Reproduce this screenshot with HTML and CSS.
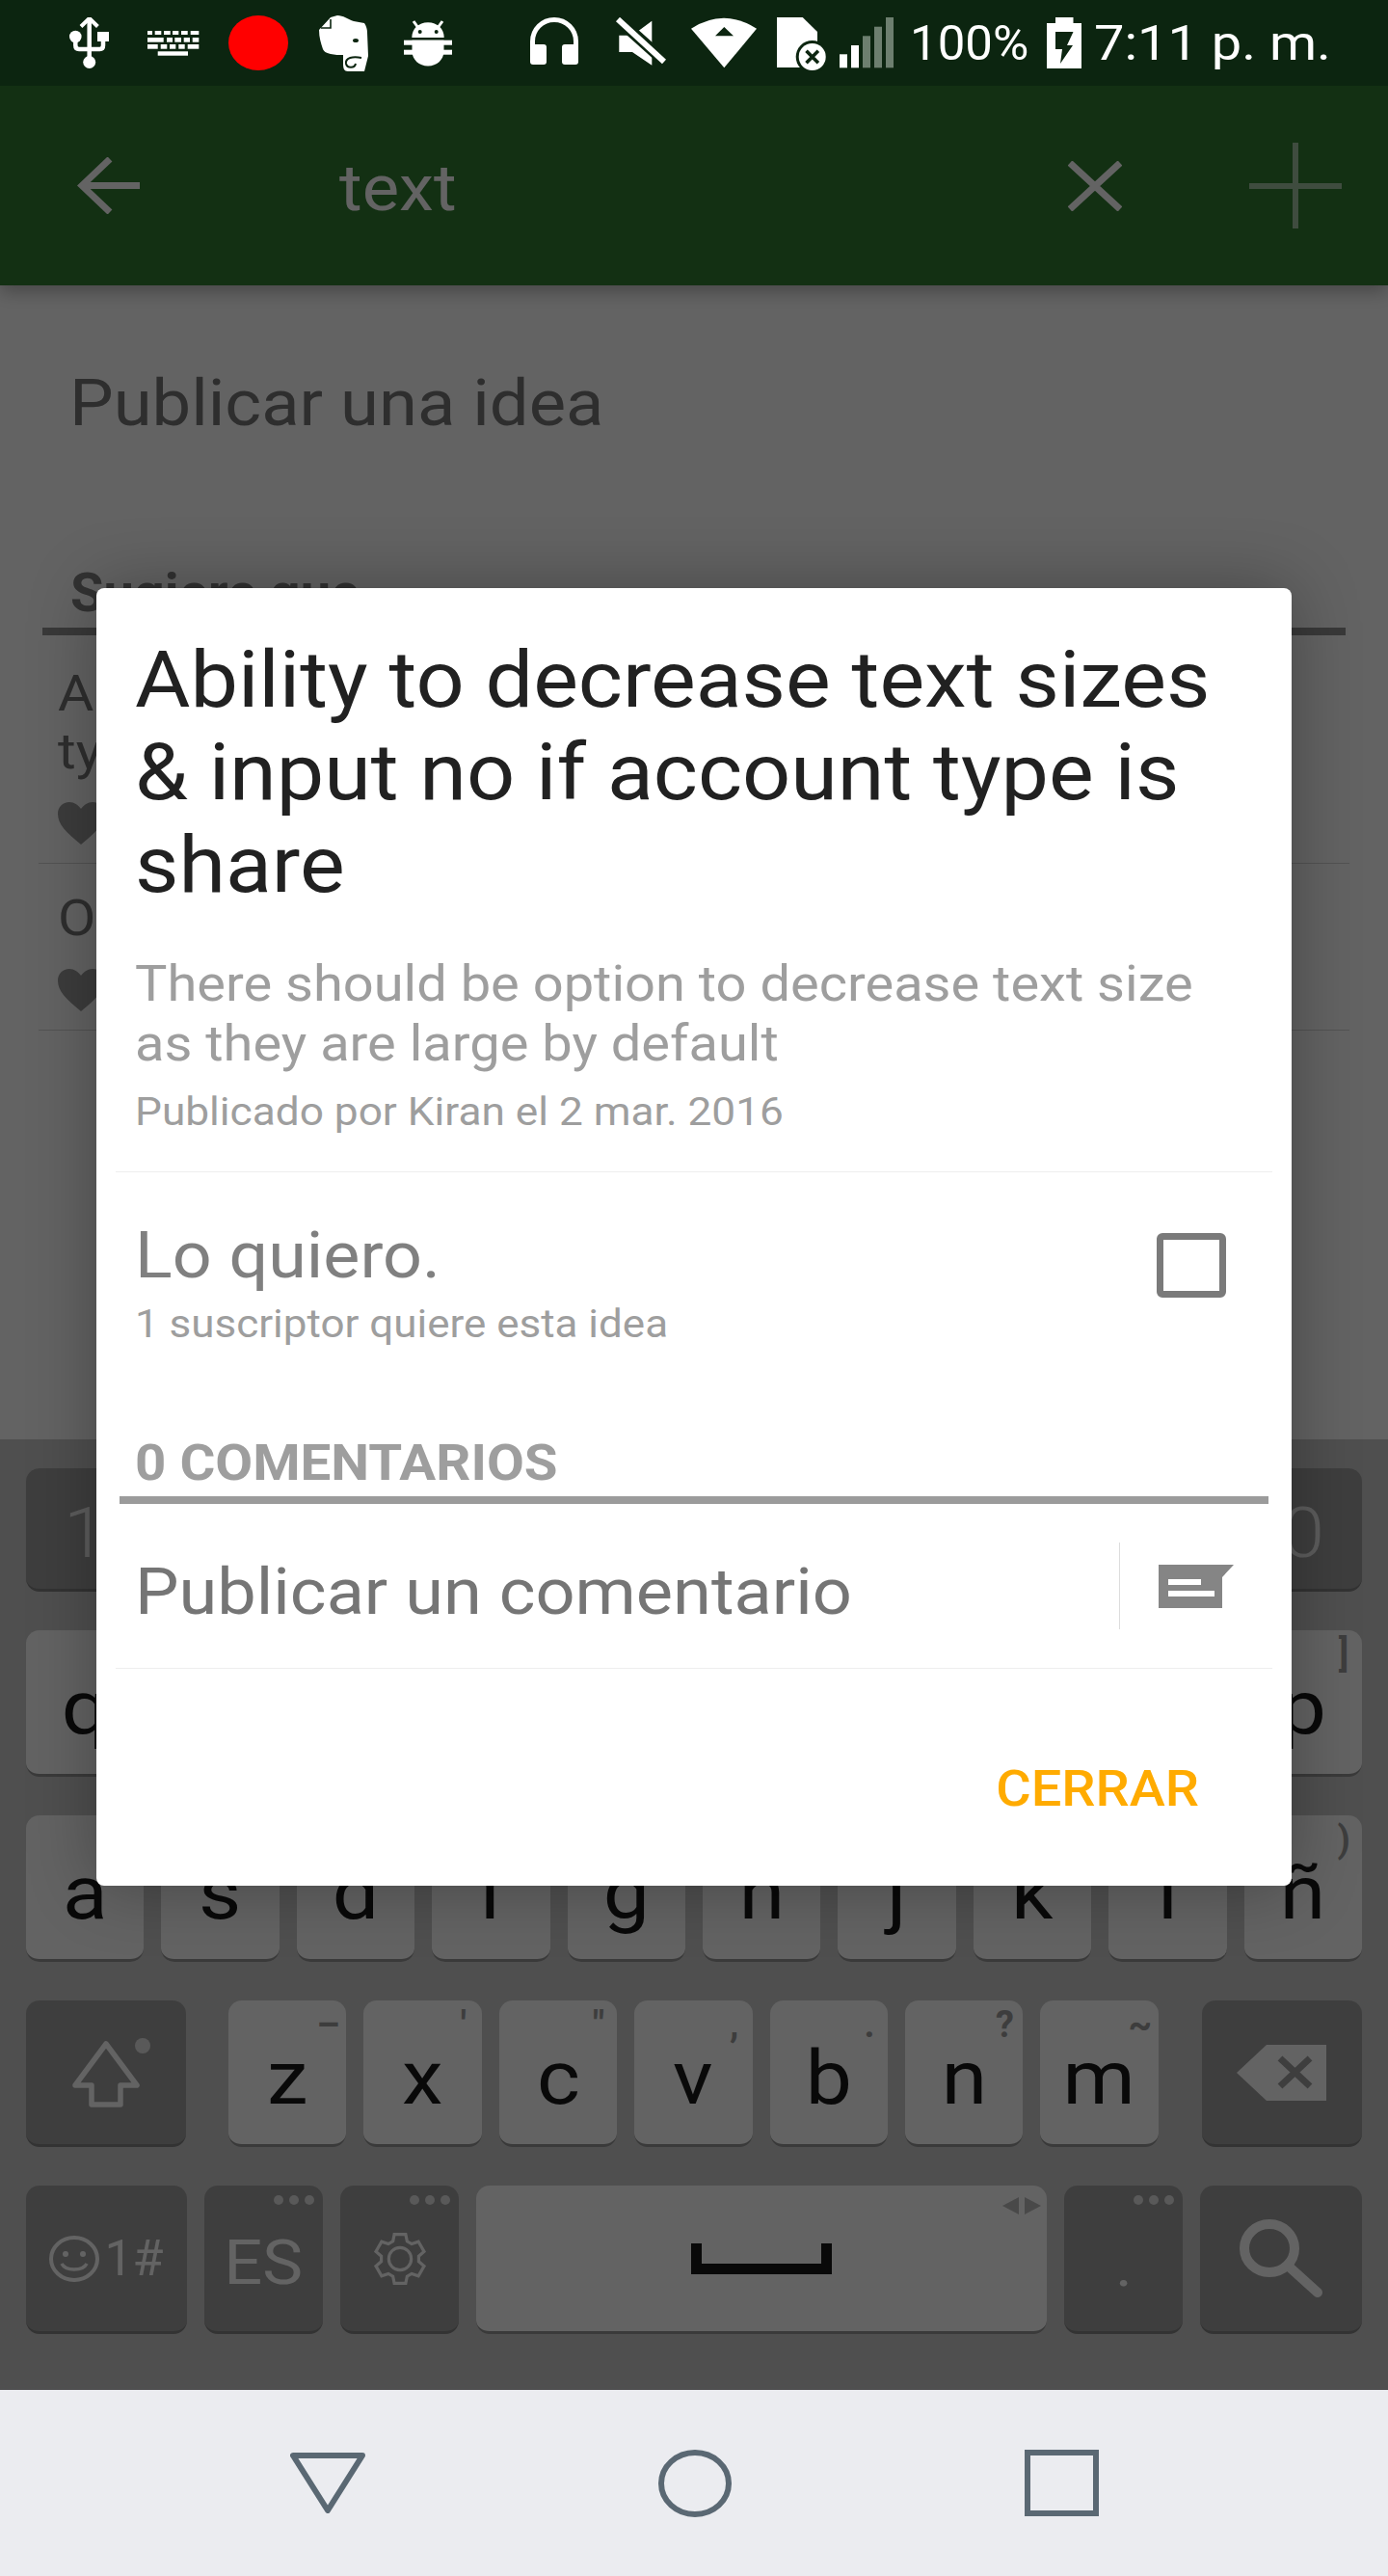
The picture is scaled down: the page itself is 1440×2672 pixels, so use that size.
FILE: index.html
```html
<!DOCTYPE html>
<html lang="es">

<head>
  <meta charset="UTF-8">
  <meta name="viewport" content="width=device-width, initial-scale=1.0">
  <title>Publicar una idea</title>
  <link rel="stylesheet" href="styles.css">
</head>

<body>
  <div class="screen">

    <div class="status">
      <svg class="ic-usb" viewBox="0 0 41 53">
        <path d="M20.7 3V46M6.3 24V29Q6.3 33 10 33H31.5Q35 33 35 29V24" fill="none" stroke="#fff" stroke-width="4.5"/>
        <path d="M12 9.5L20.7 1L29.4 9.5" fill="none" stroke="#fff" stroke-width="4"/>
        <circle cx="6.3" cy="20" r="6.3" fill="#fff"/>
        <circle cx="20.7" cy="46.5" r="6.5" fill="#fff"/>
        <rect x="29" y="15" width="12" height="10" fill="#fff"/>
      </svg>
      <svg class="ic-kbd" viewBox="0 0 54 26" fill="#fff">
        <rect x="0" y="0" width="5" height="4"/><rect x="7.7" y="0" width="6.6" height="4"/><rect x="17" y="0" width="6.7" height="4"/><rect x="26" y="0" width="6.3" height="4"/><rect x="35" y="0" width="6.7" height="4"/><rect x="44.7" y="0" width="8.6" height="4"/>
        <rect x="0" y="7" width="16.7" height="4.7"/><rect x="20" y="7" width="6" height="4.7"/><rect x="28.3" y="7" width="6.7" height="4.7"/><rect x="37.7" y="7" width="6.3" height="4.7"/><rect x="46.7" y="7" width="6.6" height="4.7"/>
        <rect x="0" y="14" width="10.7" height="4.7"/><rect x="13.7" y="14" width="6.6" height="4.7"/><rect x="23" y="14" width="6.3" height="4.7"/><rect x="32.3" y="14" width="6.4" height="4.7"/><rect x="41.7" y="14" width="11.6" height="4.7"/>
        <rect x="10.7" y="21.3" width="31.3" height="4.4"/>
      </svg>
      <span class="rec-dot"></span>
      <svg class="ic-note" viewBox="0 0 52 58">
        <path d="M13 2L20 0C26 0 31 4 37 6L48 8C50 11 51 14 51 18L52 42L48 58H31C27 58 26 55 26 50L26 41C22 41 17 41 13 40C8 39 6 37 5 35C3 29 1 23 1 15Z" fill="#fff"/>
        <path d="M13 4V13H3" fill="none" stroke="#0c2510" stroke-width="1.6"/>
        <ellipse cx="39" cy="26" rx="3" ry="2" fill="#0c2510"/>
        <path d="M45 44C36 42 28 44 29 50C30 55 38 55 39 50" fill="none" stroke="#0c2510" stroke-width="2"/>
      </svg>
      <svg class="ic-bug" viewBox="0 0 50 49">
        <path d="M14.3 8L10 2M35.7 8L40 2" stroke="#fff" stroke-width="3"/>
        <path d="M8.3 19C8.3 10 15 3.2 25 3.2C35 3.2 41.7 10 41.7 19Z" fill="#fff"/>
        <circle cx="16.7" cy="13" r="2" fill="#0c2510"/>
        <circle cx="33.7" cy="13" r="2" fill="#0c2510"/>
        <rect x="0" y="21.7" width="50" height="5" fill="#fff"/>
        <rect x="0" y="31.7" width="50" height="5" fill="#fff"/>
        <path d="M8.5 21.7H41.5V33C41.5 42 34 48.5 25 48.5C16 48.5 8.5 42 8.5 33Z" fill="#fff"/>
      </svg>
      <svg class="ic-phones" viewBox="0 0 50 50">
        <path d="M2.5 32V25A22.5 22.5 0 0 1 47.5 25V32" fill="none" stroke="#fff" stroke-width="5"/>
        <rect x="0" y="28" width="17" height="21" rx="3" fill="#fff"/>
        <rect x="33" y="28" width="17" height="21" rx="3" fill="#fff"/>
      </svg>
      <svg class="ic-mute" viewBox="0 0 52 50">
        <path d="M3.3 18.7H17L37.3 3.7V49.7L17 36H3.3Z" fill="#fff"/>
        <path d="M1 1L51 46" stroke="#0c2510" stroke-width="12"/>
        <path d="M2 2L50 46" stroke="#fff" stroke-width="6"/>
      </svg>
      <svg class="ic-wifi" viewBox="0 0 68 53">
        <path d="M0 11.7Q34 -10 68 11.7L34.3 52.3Z" fill="#fff"/>
        <path d="M25 19.3H44L34.3 10Z" fill="#0c2510"/>
      </svg>
      <svg class="ic-sim" viewBox="0 0 52 56">
        <path d="M0 0H26.7L42 15V52H0Z" fill="#fff"/>
        <circle cx="36.7" cy="41" r="17" fill="#0c2510"/>
        <circle cx="36.7" cy="41" r="14" fill="#fff"/>
        <path d="M30.5 34.8L42.9 47.2M42.9 34.8L30.5 47.2" stroke="#0c2510" stroke-width="3.6"/>
      </svg>
      <svg class="ic-signal" viewBox="0 0 56 53">
        <rect x="0" y="38.3" width="8" height="14" fill="#fff"/>
        <rect x="12" y="29" width="8" height="23.3" fill="#fff"/>
        <rect x="24" y="19.3" width="8" height="33" fill="#6d7f6f"/>
        <rect x="36" y="9.7" width="8" height="42.6" fill="#6d7f6f"/>
        <rect x="48" y="0" width="8" height="52.3" fill="#6d7f6f"/>
      </svg>
      <span class="status-pct">100%</span>
      <svg class="ic-batt" viewBox="0 0 36 53">
        <path d="M9 0H27.5V6H36V53H0V6H9Z" fill="#fff"/>
        <path d="M9 15H27.5L21 29H27L14 48L16 33H9Z" fill="#0c2510"/>
      </svg>
      <span class="status-time">7:11 p. m.</span>
    </div>

    <div class="body-wrap">
      <div class="appbar">
        <svg class="ic-back" viewBox="0 0 65 59">
          <path d="M34 2L5 29.5L34 57M5 29.5H65" fill="none" stroke="#fff" stroke-width="7"/>
        </svg>
        <span class="search-text">text</span>
        <svg class="ic-clear" viewBox="0 0 56 52">
          <path d="M2 2L54 50M54 2L2 50" stroke="#fff" stroke-width="7"/>
        </svg>
        <svg class="ic-plus" viewBox="0 0 96 89">
          <path d="M48 0V89M0 45H96" stroke="#fff" stroke-width="6"/>
        </svg>
      </div>

      <div class="page">
        <h1 class="page-title">Publicar una idea</h1>
        <h2 class="section-head">Sugiere que</h2>
        <div class="idea-list">
          <div class="idea">
            <p class="idea-text">Ability to decrease text sizes &amp; input no if<br>type is share</p>
            <svg class="ic-heart" viewBox="0 0 48 44"><path d="M24 44C8 31 0 23 0 12C0 5 5 0 12 0C17 0 21 3 24 7C27 3 31 0 36 0C43 0 48 5 48 12C48 23 40 31 24 44Z"/></svg>
          </div>
          <div class="idea">
            <p class="idea-text">Option to change the theme</p>
            <svg class="ic-heart" viewBox="0 0 48 44"><path d="M24 44C8 31 0 23 0 12C0 5 5 0 12 0C17 0 21 3 24 7C27 3 31 0 36 0C43 0 48 5 48 12C48 23 40 31 24 44Z"/></svg>
          </div>
        </div>
      </div>

      <div class="keyboard">
        <div class="kb-row row-num">
          <div class="key dark digit"><span class="ch">1</span></div><div class="key dark digit"><span class="ch">2</span></div><div class="key dark digit"><span class="ch">3</span></div><div class="key dark digit"><span class="ch">4</span></div><div class="key dark digit"><span class="ch">5</span></div>
          <div class="key dark digit"><span class="ch">6</span></div><div class="key dark digit"><span class="ch">7</span></div><div class="key dark digit"><span class="ch">8</span></div><div class="key dark digit"><span class="ch">9</span></div><div class="key dark digit"><span class="ch">0</span></div>
        </div>
        <div class="kb-row">
          <div class="key"><span class="ch">q</span></div><div class="key"><span class="ch">w</span></div><div class="key"><span class="ch">e</span></div><div class="key"><span class="ch">r</span></div><div class="key"><span class="ch">t</span></div>
          <div class="key"><span class="ch">y</span></div><div class="key"><span class="ch">u</span></div><div class="key"><span class="ch">i</span></div><div class="key"><span class="ch">o</span></div><div class="key"><span class="ch">p</span><span class="hint">]</span></div>
        </div>
        <div class="kb-row">
          <div class="key"><span class="ch">a</span></div><div class="key"><span class="ch">s</span></div><div class="key"><span class="ch">d</span></div><div class="key"><span class="ch">f</span></div><div class="key"><span class="ch">g</span></div>
          <div class="key"><span class="ch">h</span></div><div class="key"><span class="ch">j</span></div><div class="key"><span class="ch">k</span></div><div class="key"><span class="ch">l</span></div><div class="key"><span class="ch">ñ</span><span class="hint">)</span></div>
        </div>
        <div class="kb-row row-z">
          <div class="key dark wide shift">
            <svg class="ic-shift" viewBox="0 0 70 69">
              <path d="M35 3L67 46H50V66H20V46H3Z" fill="none" stroke="#fff" stroke-width="5.5" stroke-linejoin="round"/>
            </svg>
            <span class="shift-dot"></span>
          </div>
          <div class="key"><span class="ch">z</span><span class="hint">–</span></div>
          <div class="key"><span class="ch">x</span><span class="hint">'</span></div>
          <div class="key"><span class="ch">c</span><span class="hint">"</span></div>
          <div class="key"><span class="ch">v</span><span class="hint">,</span></div>
          <div class="key"><span class="ch">b</span><span class="hint">.</span></div>
          <div class="key"><span class="ch">n</span><span class="hint">?</span></div>
          <div class="key"><span class="ch">m</span><span class="hint">~</span></div>
          <div class="key dark wide center">
            <svg class="ic-bksp" viewBox="0 0 93 58">
              <path d="M0 29L31 0H93V58H31Z" fill="#fff"/>
              <path d="M45 14L76 43M76 14L45 43" stroke="#a0a0a0" stroke-width="7"/>
            </svg>
          </div>
        </div>
        <div class="kb-row row-bottom">
          <div class="key dark center sym">
            <svg class="ic-smile" viewBox="0 0 52 48">
              <ellipse cx="26" cy="24" rx="24" ry="22" fill="none" stroke="#fff" stroke-width="4"/>
              <ellipse cx="17" cy="19" rx="3" ry="3" fill="#fff"/>
              <ellipse cx="35" cy="19" rx="3" ry="3" fill="#fff"/>
              <path d="M13 29C17 37 35 37 39 29" fill="none" stroke="#fff" stroke-width="3.5"/>
            </svg>
            <span>1#</span>
          </div>
          <div class="key dark center lang"><span class="ch">ES</span><span class="more"><i></i><i></i><i></i></span></div>
          <div class="key dark center">
            <svg class="ic-gear" viewBox="0 0 60 60">
              <path d="M22.13 10.53L23.7 2.72H36.3L37.87 10.53L42.93 13.45L50.48 10.9L56.78 21.81L50.8 27.08V32.92L56.78 38.19L50.48 49.1L42.93 46.55L37.87 49.47L36.3 57.28H23.7L22.13 49.47L17.07 46.55L9.52 49.1L3.22 38.19L9.2 32.92V27.08L3.22 21.81L9.52 10.9L17.07 13.45Z" fill="none" stroke="#fff" stroke-width="3.4"/>
              <circle cx="30" cy="30" r="12.5" fill="none" stroke="#fff" stroke-width="3.4"/>
            </svg>
            <span class="more"><i></i><i></i><i></i></span>
          </div>
          <div class="key space center">
            <span class="space-mark"></span>
            <svg class="ic-cursor" viewBox="0 0 40 18">
              <path d="M17 0V18L0 9ZM23 0L40 9L23 18Z" fill="#bdbdbd"/>
            </svg>
          </div>
          <div class="key dark center period"><span class="ch">.</span><span class="more"><i></i><i></i><i></i></span></div>
          <div class="key dark center search">
            <svg class="ic-search" viewBox="0 0 87 82">
              <ellipse cx="31" cy="30" rx="26" ry="25" fill="none" stroke="#fff" stroke-width="10"/>
              <path d="M50 48L81 76" stroke="#fff" stroke-width="10" stroke-linecap="round"/>
            </svg>
          </div>
        </div>
      </div>

      <div class="scrim"></div>
    </div>

    <div class="navbar">
      <svg class="ic-nav-back" viewBox="0 0 78 63"><path d="M3 3H75L39 60Z" fill="none" stroke="#5a6873" stroke-width="6" stroke-linejoin="round"/></svg>
      <svg class="ic-nav-home" viewBox="0 0 76 70"><ellipse cx="38" cy="35" rx="35" ry="32" fill="none" stroke="#5a6873" stroke-width="6"/></svg>
      <svg class="ic-nav-recent" viewBox="0 0 77 69"><rect x="3" y="3" width="71" height="63" fill="none" stroke="#5a6873" stroke-width="6"/></svg>
    </div>

    <div class="dialog">
      <h2 class="dlg-title">Ability to decrease text sizes<br>&amp; input no if account type is<br>share</h2>
      <p class="dlg-desc">There should be option to decrease text size<br>as they are large by default</p>
      <p class="dlg-meta">Publicado por Kiran el 2 mar. 2016</p>
      <div class="vote-row">
        <div>
          <div class="vote-label">Lo quiero.</div>
          <div class="vote-count">1 suscriptor quiere esta idea</div>
        </div>
        <span class="checkbox"></span>
      </div>
      <div class="comments-head"><span class="comments-text">0 COMENTARIOS</span></div>
      <div class="comment-row">
        <span class="comment-input">Publicar un comentario</span>
        <span class="comment-send">
          <svg class="ic-send" viewBox="0 0 78 45">
            <path d="M0 0H78L66 13V45H0Z" fill="#858585"/>
            <rect x="10" y="15" width="34" height="6" fill="#fff"/>
            <rect x="10" y="27" width="48" height="6" fill="#fff"/>
          </svg>
        </span>
      </div>
      <div class="dlg-actions"><span class="btn-close">CERRAR</span></div>
    </div>

  </div>
</body>
</html>
```

FILE: styles.css
```css
* {
  box-sizing: border-box;
}
html, body {
  margin: 0;
  padding: 0;
}
body {
  font-family: Roboto, "Liberation Sans", sans-serif;
  background-color: #000;
}
h1, h2, p {
  margin: 0;
  font-weight: normal;
}
svg {
  display: block;
  flex: none;
}

.screen {
  position: relative;
  width: 1440px;
  height: 2672px;
  display: flex;
  flex-direction: column;
  overflow: hidden;
}

/* status bar */
.status {
  height: 89px;
  flex: none;
  display: flex;
  align-items: center;
  padding-left: 72px;
  background-color: #0c2510;
  color: #fff;
  position: relative;
  z-index: 2;
}
.ic-usb { width: 41px; height: 53px; }
.ic-kbd { width: 54px; height: 26px; margin-left: 40px; }
.rec-dot {
  width: 62px;
  height: 57px;
  margin-left: 30px;
  border-radius: 50%;
  background-color: #f00;
}
.ic-note { width: 52px; height: 58px; margin-left: 31px; }
.ic-bug { width: 50px; height: 49px; margin-left: 37px; }
.ic-phones { width: 50px; height: 50px; margin-left: 81px; margin-top: -3px; }
.ic-mute { width: 52px; height: 50px; margin-left: 39px; margin-top: -3px; }
.ic-wifi { width: 68px; height: 53px; margin-left: 26px; }
.ic-sim { width: 52px; height: 56px; margin-left: 21px; margin-top: 2px; }
.ic-signal { width: 56px; height: 53px; margin-left: 13px; }
.status-pct {
  width: 122px;
  margin-left: 17px;
  font-size: 50px;
  line-height: 60px;
  white-space: nowrap;
  transform: scaleX(1.02);
  transform-origin: left;
}
.ic-batt { width: 36px; height: 53px; margin-left: 20px; }
.status-time {
  margin-left: 13px;
  font-size: 50px;
  line-height: 60px;
  white-space: nowrap;
  transform: scaleX(1.12);
  transform-origin: left;
}

/* everything the dialog dims */
.body-wrap {
  position: relative;
  flex: 1;
  display: flex;
  flex-direction: column;
  min-height: 0;
}
.scrim {
  position: absolute;
  top: 0;
  left: 0;
  right: 0;
  bottom: 0;
  background-color: rgba(0, 0, 0, 0.61);
}

.appbar {
  height: 207px;
  flex: none;
  display: flex;
  align-items: center;
  padding-right: 48px;
  background-color: #337c33;
  box-shadow: 0 6px 18px rgba(0, 0, 0, 0.3);
  color: #fff;
  position: relative;
}
.ic-back { width: 65px; height: 59px; margin-left: 80px; }
.search-text {
  margin-left: 207px;
  padding-top: 5px;
  font-size: 67px;
  line-height: 82px;
  transform: scaleX(1.08);
  transform-origin: left;
}
.ic-clear { width: 56px; height: 52px; margin-left: auto; }
.ic-plus { width: 96px; height: 89px; margin-left: 132px; opacity: 0.55; }

.page {
  height: 1197px;
  flex: none;
  background-color: #fff;
  padding-top: 84px;
  overflow: hidden;
}
.page-title {
  padding-left: 72px;
  font-size: 67px;
  line-height: 76px;
  color: #777;
  transform: scaleX(1.08);
  transform-origin: 72px 0;
}
.section-head {
  margin: 126px 44px 0;
  padding: 0 0 3px 29px;
  border-bottom: 8px solid #939393;
  font-size: 56px;
  line-height: 66px;
  font-weight: bold;
  color: #818181;
}
.idea-list {
  margin: 0 40px;
  padding-top: 4px;
}
.idea {
  padding: 27px 0 19px 20px;
  border-bottom: 1px solid #d5d5d5;
}
.idea-text {
  font-size: 52px;
  line-height: 60px;
  color: #777;
  white-space: nowrap;
  transform: scaleX(1.1);
  transform-origin: left;
}
.ic-heart {
  width: 48px;
  height: 44px;
  margin-top: 22px;
  fill: #9a9a9a;
}

/* keyboard */
.keyboard {
  flex: 1;
  display: flex;
  flex-direction: column;
  gap: 40px;
  padding: 30px 27px 0;
  background-color: #cbcbcb;
}
.kb-row {
  height: 152px;
  display: flex;
  gap: 18px;
}
.row-num { height: 128px; }
.row-bottom { height: 154px; }
.key {
  position: relative;
  flex: 1;
  padding-top: 36px;
  border-radius: 14px;
  border-bottom: 3px solid #959595;
  background-color: #fff;
  color: #191919;
  font-size: 78px;
  line-height: 90px;
  text-align: center;
}
.key.dark {
  background-color: #a0a0a0;
  border-bottom-color: #838383;
  color: #fff;
}
.key.digit {
  padding-top: 26px;
  font-size: 72px;
  line-height: 84px;
  font-weight: 300;
  color: #f0f0f0;
}
.key.center {
  display: flex;
  align-items: center;
  justify-content: center;
  padding-top: 0;
}
.ch {
  display: inline-block;
  transform: scaleX(1.1);
}
.hint {
  position: absolute;
  top: 6px;
  right: 0;
  width: 38px;
  font-size: 38px;
  line-height: 38px;
  font-weight: bold;
  color: #9d9d9d;
}

.row-z .key { flex: none; width: 122.4px; }
.row-z .key.wide { width: 166px; }
.row-z .key.shift { margin-right: 26px; }
.row-z .key.wide.center { margin-left: 27px; }
.shift {
  display: flex;
  justify-content: center;
  padding-top: 42px;
}
.ic-shift { width: 70px; height: 69px; }
.shift-dot {
  position: absolute;
  top: 39px;
  right: 37px;
  width: 16px;
  height: 16px;
  border-radius: 50%;
  background-color: #e4e4e4;
}
.ic-bksp { width: 93px; height: 58px; }

.row-bottom .key { flex: none; width: 123px; }
.row-bottom .key.sym { width: 167px; }
.row-bottom .key.search { width: 168px; }
.row-bottom .key.space { width: 592px; }
.sym {
  gap: 5px;
  font-size: 52px;
  color: #fff;
}
.ic-smile { width: 52px; height: 48px; }
.key.center.lang {
  padding-top: 10px;
  font-size: 64px;
}
.ic-gear { width: 58px; height: 56px; }
.more {
  position: absolute;
  top: 10px;
  right: 9px;
  display: flex;
  gap: 6px;
}
.more i {
  width: 10px;
  height: 10px;
  border-radius: 50%;
  background-color: #e4e4e4;
}
.key.center.period {
  padding-top: 16px;
  font-size: 60px;
}
.space-mark {
  width: 146px;
  height: 32px;
  border: 11px solid #191919;
  border-top: 0;
}
.ic-cursor {
  position: absolute;
  top: 12px;
  right: 6px;
  width: 40px;
  height: 18px;
}
.ic-search { width: 87px; height: 82px; }

/* nav bar */
.navbar {
  height: 193px;
  flex: none;
  display: flex;
  align-items: center;
  justify-content: center;
  gap: 304px;
  background-color: #ebecf0;
}
.ic-nav-back { width: 78px; height: 63px; }
.ic-nav-home { width: 76px; height: 70px; }
.ic-nav-recent { width: 77px; height: 69px; }

/* dialog */
.dialog {
  position: absolute;
  top: 610px;
  left: 100px;
  width: 1240px;
  height: 1346px;
  padding-top: 47px;
  border-radius: 8px;
  background-color: #fff;
  box-shadow: 0 0 70px rgba(0, 0, 0, 0.3);
}
.dlg-title {
  margin: 0 40px;
  font-size: 82px;
  line-height: 96px;
  color: #212121;
  white-space: nowrap;
  transform: scaleX(1.074);
  transform-origin: left;
}
.dlg-desc {
  margin: 45px 40px 0;
  font-size: 52px;
  line-height: 62px;
  color: #9e9e9e;
  white-space: nowrap;
  transform: scaleX(1.077);
  transform-origin: left;
}
.dlg-meta {
  margin: 14px 40px 0;
  padding-bottom: 37px;
  font-size: 41px;
  line-height: 50px;
  color: #9e9e9e;
  white-space: nowrap;
  transform: scaleX(1.078);
  transform-origin: left;
}
.vote-row {
  display: flex;
  justify-content: space-between;
  margin: 0 20px;
  padding: 49px 48px 0 20px;
  border-top: 1px solid #eee;
}
.vote-label {
  font-size: 66px;
  line-height: 76px;
  color: #808080;
  transform: scaleX(1.088);
  transform-origin: left;
}
.vote-count {
  margin-top: 8px;
  font-size: 41px;
  line-height: 48px;
  color: #9e9e9e;
  transform: scaleX(1.072);
  transform-origin: left;
}
.checkbox {
  width: 72px;
  height: 67px;
  margin-top: 14px;
  border: 7px solid #7a7a7a;
  border-radius: 6px;
}
.comments-head {
  margin: 91px 24px 0;
  padding: 0 0 4px 16px;
  border-bottom: 8px solid #9b9b9b;
  font-size: 52px;
  line-height: 60px;
  font-weight: bold;
  color: #9e9e9e;
}
.comments-text {
  display: inline-block;
  transform: scaleX(1.085);
  transform-origin: left;
}
.comment-row {
  display: flex;
  align-items: center;
  justify-content: space-between;
  height: 171px;
  margin: 0 20px;
  padding-left: 20px;
  border-bottom: 1px solid #eee;
}
.comment-input {
  padding-top: 13px;
  font-size: 66px;
  line-height: 78px;
  color: #757575;
  transform: scaleX(1.093);
  transform-origin: left;
}
.comment-send {
  display: flex;
  align-items: center;
  width: 159px;
  height: 90px;
  padding-left: 40px;
  border-left: 1px solid #ddd;
}
.ic-send { width: 78px; height: 45px; }
.dlg-actions {
  display: flex;
  justify-content: flex-end;
  padding: 95px 96px 0 0;
}
.btn-close {
  font-size: 52px;
  line-height: 60px;
  font-weight: 500;
  color: #ffab00;
  transform: scaleX(1.075);
  transform-origin: right;
}
```
